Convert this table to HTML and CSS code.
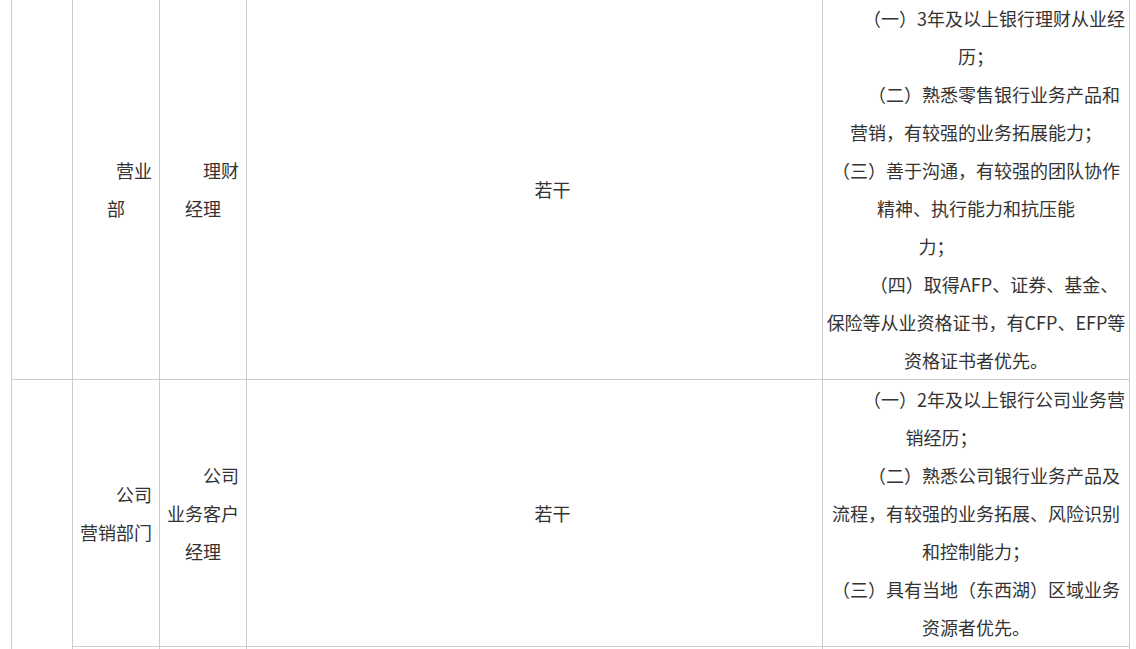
FILE: index.html
```html
<!DOCTYPE html>
<html lang="zh-CN">
<head>
    <meta charset="UTF-8">
    <meta name="viewport" content="width=device-width, initial-scale=1.0">
    <title>招聘岗位</title>
    <link rel="stylesheet" href="styles.css">
</head>
<body>
    <div class="wrap">
        <table class="jobs">
            <colgroup>
                <col class="c-num">
                <col class="c-dept">
                <col class="c-post">
                <col class="c-count">
                <col class="c-req">
            </colgroup>
            <tr>
                <td></td>
                <td class="mid">营业<br>部</td>
                <td class="mid">理财<br>经理</td>
                <td class="mid">若干</td>
                <td class="req">
                    <p class="indent">（一）3年及以上银行理财从业经<br>历；</p>
                    <p class="indent">（二）熟悉零售银行业务产品和<br>营销，有较强的业务拓展能力；</p>
                    <p>（三）善于沟通，有较强的团队协作<br>精神、执行能力和抗压能<br><span class="tail-a">力；</span></p>
                    <p class="indent">（四）取得AFP、证券、基金、<br>保险等从业资格证书，有CFP、EFP等<br>资格证书者优先。</p>
                </td>
            </tr>
            <tr>
                <td rowspan="2"></td>
                <td class="mid">公司<br>营销部门</td>
                <td class="mid">公司<br>业务客户<br>经理</td>
                <td class="mid">若干</td>
                <td class="req">
                    <p class="indent">（一）2年及以上银行公司业务营<br><span class="tail-b">销经历；</span></p>
                    <p class="indent">（二）熟悉公司银行业务产品及<br>流程，有较强的业务拓展、风险识别<br>和控制能力；</p>
                    <p>（三）具有当地（东西湖）区域业务<br>资源者优先。</p>
                </td>
            </tr>
            <tr class="next">
                <td class="mid">&nbsp;</td>
                <td class="mid">&nbsp;</td>
                <td class="mid">&nbsp;</td>
                <td class="req">&nbsp;</td>
            </tr>
        </table>
    </div>
</body>
</html>
```

FILE: styles.css
```css
body {
    margin: 0;
    background-color: #fff;
    color: #333;
    font-family: "Microsoft YaHei", "Noto Sans CJK SC", sans-serif;
    font-size: 18px;
}
.wrap {
    padding-left: 11px;
    margin-top: -2px;
}
.jobs {
    width: 1119px;
    table-layout: fixed;
    border-collapse: collapse;
    line-height: 38px;
}
.jobs td {
    border: 1px solid #ccc;
    padding: 0;
    vertical-align: middle;
    text-align: center;
}
.c-num { width: 61px; }
.c-dept { width: 87px; }
.c-post { width: 87px; }
.c-count { width: 576px; }
.c-req { width: 307px; }

/* первая строка ячейки сдвинута на два знака */
.jobs td.mid {
    text-indent: 2em;
}
.jobs td.req {
    white-space: nowrap;
}
.req p {
    margin: 0;
}
.req p.indent {
    text-indent: 2em;
}
.tail-a {
    padding-right: 79px;
}
.tail-b {
    padding-right: 69px;
}
.next td {
    height: 120px;
}
```
